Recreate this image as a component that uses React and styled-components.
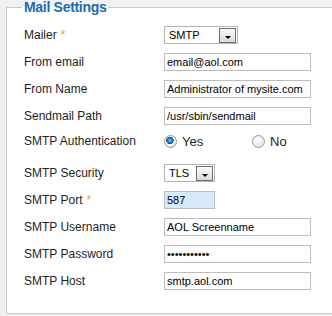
import React from "react";
import styled, { createGlobalStyle } from "styled-components";

const Global = createGlobalStyle`
  html, body { margin: 0; padding: 0; }
  body {
    background: #f1f1f1;
    font-family: "Liberation Sans", Arial, sans-serif;
    overflow: hidden;
  }
`;

const Page = styled.div`
  width: 332px;
  height: 316px;
  overflow: hidden;
`;

const Fieldset = styled.fieldset`
  margin: 0 -20px 0 6px;
  padding: 11px 0 23px 17px;
  border: 1px solid #c9c9c9;
  background: #fff;
  min-inline-size: 0;
`;

const Legend = styled.legend`
  margin-left: -2px;
  padding: 0 2px;
  font-size: 14px;
  line-height: 15px;
  font-weight: bold;
  letter-spacing: -0.3px;
  color: #1a6cae;
`;

const Row = styled.div`
  display: flex;
  align-items: center;
  height: ${(p) => p.$h || 18}px;
  margin-bottom: ${(p) => p.$mb ?? 9}px;
`;

const Label = styled.label`
  width: 140px;
  flex: none;
  font-size: 12px;
  color: #1e1e1e;
`;

const Star = styled.span`
  color: #ee9a2c;
  margin-left: 4px;
  font-size: 12px;
`;

const TextInput = styled.input`
  box-sizing: border-box;
  width: ${(p) => p.$w || 147}px;
  height: 18px;
  margin: 0;
  padding: 0 2px;
  border: 1px solid #bdbdbd;
  background: ${(p) => (p.$focus ? "#d8eafc" : "#fff")};
  font-family: "Liberation Sans", Arial, sans-serif;
  font-size: 11px;
  color: #000;
  outline: none;
`;

const SelectBox = styled.div`
  box-sizing: border-box;
  width: ${(p) => p.$w}px;
  height: 18px;
  display: flex;
  align-items: center;
  justify-content: space-between;
  border: 1px solid #b5b5b5;
  background: #fff;
  padding: 0 1px 0 4px;
  font-size: 11px;
  color: #000;
`;

const Arrow = styled.span`
  box-sizing: border-box;
  width: 17px;
  height: 15px;
  border: 1px solid #6e6e6e;
  background: linear-gradient(#fbfbfb, #dadada);
  display: flex;
  align-items: flex-end;
  justify-content: center;
  padding-bottom: 3px;
`;

const Tri = styled.span`
  width: 0;
  height: 0;
  border-left: 3px solid transparent;
  border-right: 3px solid transparent;
  border-top: 3px solid #000;
`;

const RadioGroup = styled.div`
  display: flex;
  align-items: center;
`;

const Option = styled.label`
  display: flex;
  align-items: center;
  width: ${(p) => p.$w || "auto"};
  font-size: 13px;
  color: #1e1e1e;
`;

const Radio = styled.input`
  appearance: none;
  box-sizing: border-box;
  width: 13px;
  height: 13px;
  margin: 0 5px 0 0;
  border-radius: 50%;
  border: 1px solid #9a9a9a;
  background: radial-gradient(circle at 40% 35%, #fff, #dcdcdc);
  &:checked {
    background: radial-gradient(circle at 45% 40%, #7fc2ec 0, #1f78b8 2.5px, #0d4f86 3.5px, #fff 4px, #fff 5px, #e4e4e4 6px);
  }
`;

function Select({ w, value }) {
  return (
    <SelectBox $w={w}>
      <span>{value}</span>
      <Arrow>
        <Tri />
      </Arrow>
    </SelectBox>
  );
}

export default function App() {
  return (
    <Page>
      <Global />
      <Fieldset>
        <Legend>Mail Settings</Legend>
        <Row>
          <Label>
            Mailer<Star>*</Star>
          </Label>
          <Select w={74} value="SMTP" />
        </Row>
        <Row>
          <Label>From email</Label>
          <TextInput defaultValue="email@aol.com" />
        </Row>
        <Row>
          <Label>From Name</Label>
          <TextInput defaultValue="Administrator of mysite.com" />
        </Row>
        <Row>
          <Label>Sendmail Path</Label>
          <TextInput defaultValue="/usr/sbin/sendmail" />
        </Row>
        <Row $h={14} $mb={16}>
          <Label>SMTP Authentication</Label>
          <RadioGroup>
            <Option $w="88px">
              <Radio type="radio" name="auth" defaultChecked />
              Yes
            </Option>
            <Option>
              <Radio type="radio" name="auth" />
              No
            </Option>
          </RadioGroup>
        </Row>
        <Row>
          <Label>SMTP Security</Label>
          <Select w={51} value="TLS" />
        </Row>
        <Row>
          <Label>
            SMTP Port<Star>*</Star>
          </Label>
          <TextInput $w={51} $focus defaultValue="587" />
        </Row>
        <Row>
          <Label>SMTP Username</Label>
          <TextInput defaultValue="AOL Screenname" />
        </Row>
        <Row>
          <Label>SMTP Password</Label>
          <TextInput type="password" defaultValue="abcdefghijk" />
        </Row>
        <Row $mb={0}>
          <Label>SMTP Host</Label>
          <TextInput defaultValue="smtp.aol.com" />
        </Row>
      </Fieldset>
    </Page>
  );
}
